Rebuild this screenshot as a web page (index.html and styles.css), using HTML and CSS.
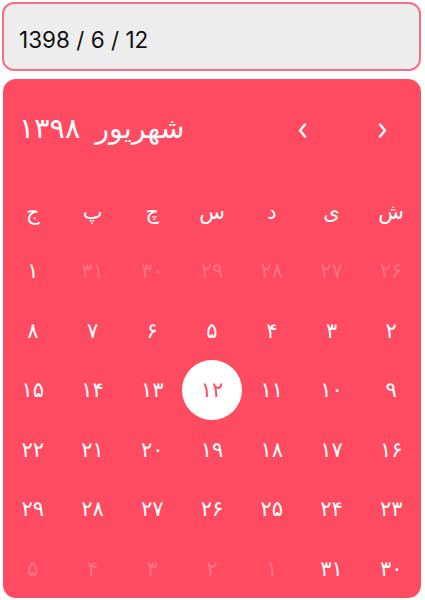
FILE: index.html
```html
<!DOCTYPE html>
<html lang="fa">
<head>
<meta charset="utf-8">
<link rel="stylesheet" href="styles.css">
</head>
<body>
<div class="page">
  <div class="input">1398 / 6 / 12</div>
  <div class="cal" dir="rtl">
    <div class="head">
      <div class="navs">
        <span class="nav"><svg width="9" height="15" viewBox="0 0 9 15"><polyline points="2,1.5 7,7.5 2,13.5" fill="none" stroke="#fff" stroke-width="2.4" stroke-linecap="round" stroke-linejoin="round"/></svg></span>
        <span class="nav"><svg width="9" height="15" viewBox="0 0 9 15"><polyline points="7,1.5 2,7.5 7,13.5" fill="none" stroke="#fff" stroke-width="2.4" stroke-linecap="round" stroke-linejoin="round"/></svg></span>
      </div>
      <div class="title"><span>شهریور</span> <span>۱۳۹۸</span></div>
    </div>
    <div class="grid">
      <div class="wd">ش</div><div class="wd">ی</div><div class="wd">د</div><div class="wd">س</div><div class="wd">چ</div><div class="wd">پ</div><div class="wd">ج</div>

      <div class="d off">۲۶</div><div class="d off">۲۷</div><div class="d off">۲۸</div><div class="d off">۲۹</div><div class="d off">۳۰</div><div class="d off">۳۱</div><div class="d">۱</div>
      <div class="d">۲</div><div class="d">۳</div><div class="d">۴</div><div class="d">۵</div><div class="d">۶</div><div class="d">۷</div><div class="d">۸</div>
      <div class="d">۹</div><div class="d">۱۰</div><div class="d">۱۱</div><div class="d sel"><span>۱۲</span></div><div class="d">۱۳</div><div class="d">۱۴</div><div class="d">۱۵</div>
      <div class="d">۱۶</div><div class="d">۱۷</div><div class="d">۱۸</div><div class="d">۱۹</div><div class="d">۲۰</div><div class="d">۲۱</div><div class="d">۲۲</div>
      <div class="d">۲۳</div><div class="d">۲۴</div><div class="d">۲۵</div><div class="d">۲۶</div><div class="d">۲۷</div><div class="d">۲۸</div><div class="d">۲۹</div>
      <div class="d">۳۰</div><div class="d">۳۱</div><div class="d off">۱</div><div class="d off">۲</div><div class="d off">۳</div><div class="d off">۴</div><div class="d off">۵</div>
    </div>
  </div>
</div>
</body>
</html>
```
FILE: styles.css
```css
html, body {
  margin: 0;
  padding: 0;
  background: #ffffff;
}
.page {
  width: 425px;
  padding: 2px 4px 0 2px;
  box-sizing: border-box;
  display: flex;
  flex-direction: column;
  gap: 8px;
}
.input {
  height: 69px;
  box-sizing: border-box;
  border: 2px solid #f7707f;
  border-radius: 12px;
  background: #ededed;
  padding: 6px 0 0 15px;
  display: flex;
  align-items: center;
  font-family: Inter, "Liberation Sans", sans-serif;
  font-size: 22.5px;
  color: #111;
}
.cal {
  margin-left: 1px;
  width: 418px;
  height: 519px;
  background: #ff4b61;
  border-radius: 13px;
  font-family: "DejaVu Sans", sans-serif;
  color: #fff;
  overflow: hidden;
}
.head {
  height: 103px;
  display: flex;
  align-items: center;
  justify-content: space-between;
  padding: 0 34px 0 16px;
  box-sizing: border-box;
}
.navs {
  display: flex;
  gap: 71px;
  align-items: center;
}
.nav {
  display: flex;
  width: 9px;
  height: 15px;
}
.title {
  font-size: 28.5px;
  line-height: 1;
  margin-top: -2px;
  word-spacing: 6px;
}
.grid {
  display: grid;
  grid-template-columns: repeat(7, 1fr);
  grid-auto-rows: 59.5px;
}
.wd, .d {
  display: flex;
  align-items: center;
  justify-content: center;
  font-size: 21px;
}
.off {
  color: rgba(255, 255, 255, 0.22);
}
.sel span {
  width: 60px;
  height: 60px;
  border-radius: 50%;
  background: #fff;
  color: #ff4b61;
  display: flex;
  align-items: center;
  justify-content: center;
}
```
